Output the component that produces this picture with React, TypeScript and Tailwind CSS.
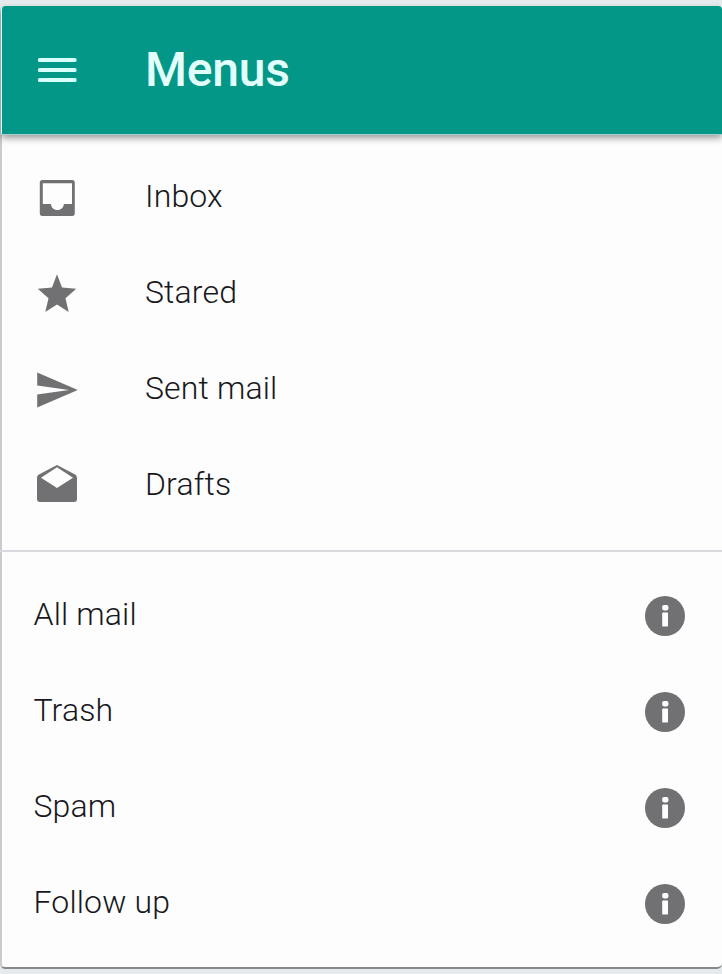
const folders = [
  {
    label: 'Inbox',
    path: 'M19.7 3H4.6c-.7 0-1.2.5-1.2 1.2v15.6c0 .7.5 1.2 1.2 1.2h15.1c.7 0 1.2-.5 1.2-1.2V4.2c0-.7-.5-1.2-1.2-1.2zm-.2 12H15.4c0 1.7-1.4 3-3.2 3S9 16.7 9 15H4.9V4.6h14.6V15z',
  },
  {
    label: 'Stared',
    path: 'M12 17.27L17.85 21l-1.6-6.9 5.35-4.76-7.1-.6L12 2.1 9.5 8.74l-7.1.6 5.35 4.76L6.15 21z',
  },
  {
    label: 'Sent mail',
    path: 'M2.1 20.8L22.4 12 2.1 3.2v6.6L18 12 2.1 14.2z',
  },
  {
    label: 'Drafts',
    path: 'M21.99 8c0-.72-.37-1.35-.94-1.7L12 1.5 2.95 6.3C2.38 6.65 2 7.28 2 8v10.6c0 .8.6 1.4 1.4 1.4h17.2c.8 0 1.4-.6 1.4-1.4L21.99 8zM12 13L4 7.9 12 2.6l8 5.3L12 13z',
  },
];

const extras = ['All mail', 'Trash', 'Spam', 'Follow up'];

function Icon({ path }: { path: string }) {
  return (
    <svg viewBox="0 0 24 24" className="size-12 shrink-0 fill-[#717173]">
      <path d={path} />
    </svg>
  );
}

function InfoIcon() {
  return (
    <svg viewBox="0 0 48 48" className="size-12 shrink-0 fill-[#717173]">
      <circle cx="24" cy="24" r="20" />
      <rect x="21.2" y="13" width="6.2" height="5.4" rx="1.8" className="fill-[#fdfdfe]" />
      <rect x="21.2" y="20.6" width="5.8" height="14" rx="0.8" className="fill-[#fdfdfe]" />
    </svg>
  );
}

export default function App() {
  return (
    <div className="h-[974px] w-[722px] overflow-hidden bg-[#e5eaed] pt-1.5 font-['Roboto','Liberation_Sans',sans-serif]">
      <div className="flex h-[963px] w-[722px] flex-col rounded-[5px] border-b-2 border-l-2 border-b-[#88888b] border-l-[#c9cccf] bg-[#fdfdfe]">
        <header className="relative -ml-px flex h-32 shrink-0 items-center rounded-t-[4px] border-l border-[#dffafa] bg-[#029786] pl-[31px] shadow-[0_1px_0_#a5cfc9,0_4px_7px_rgba(0,0,0,0.4)]">
          <svg viewBox="0 0 48 48" className="size-12 fill-[#d8fffb]">
            <rect x="5" y="12" width="38.5" height="4" rx="1.5" />
            <rect x="5" y="22" width="38.5" height="4" rx="1.5" />
            <rect x="5" y="32" width="38.5" height="4" rx="1.5" />
          </svg>
          <h1 className="ml-16 text-[48px] font-medium leading-[64px] tracking-[-0.2px] text-[#e2fffc]">Menus</h1>
        </header>
        <ul className="py-4">
          {folders.map((f) => (
            <li key={f.label} className="flex h-24 items-center pl-[31px]">
              <Icon path={f.path} />
              <span className="ml-16 pb-1 text-[32px] font-light leading-8 tracking-[0.15px] text-[#18181c]">{f.label}</span>
            </li>
          ))}
        </ul>
        <div className="-ml-0.5 h-0.5 shrink-0 bg-[#d9dadd]" />
        <ul className="pt-4">
          {extras.map((label) => (
            <li key={label} className="flex h-24 items-center justify-between pl-[31.5px] pr-[33px]">
              <span className="pb-1 text-[32px] font-light leading-8 tracking-[0.15px] text-[#18181c]">{label}</span>
              <InfoIcon />
            </li>
          ))}
        </ul>
      </div>
    </div>
  );
}
